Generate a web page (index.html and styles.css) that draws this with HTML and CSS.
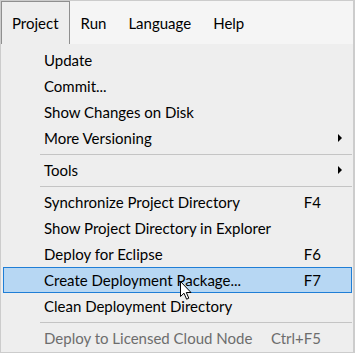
FILE: index.html
```html
<!DOCTYPE html>
<html>
<head>
<meta charset="utf-8">
<link rel="stylesheet" href="styles.css">
</head>
<body>
<div class="window">
  <div class="menubar">
    <div class="top-item active">Project</div>
    <div class="top-item">Run</div>
    <div class="top-item">Language</div>
    <div class="top-item">Help</div>
  </div>
  <div class="menu">
    <div class="item"><span class="label">Update</span><span class="key"></span><span class="sub"></span></div>
    <div class="item"><span class="label">Commit...</span><span class="key"></span><span class="sub"></span></div>
    <div class="item"><span class="label">Show Changes on Disk</span><span class="key"></span><span class="sub"></span></div>
    <div class="item"><span class="label">More Versioning</span><span class="key"></span><span class="sub"><span class="arrow"></span></span></div>
    <div class="sep"></div>
    <div class="item"><span class="label">Tools</span><span class="key"></span><span class="sub"><span class="arrow"></span></span></div>
    <div class="sep"></div>
    <div class="item"><span class="label">Synchronize Project Directory</span><span class="key">F4</span><span class="sub"></span></div>
    <div class="item"><span class="label">Show Project Directory in Explorer</span><span class="key"></span><span class="sub"></span></div>
    <div class="item"><span class="label">Deploy for Eclipse</span><span class="key">F6</span><span class="sub"></span></div>
    <div class="item selected"><span class="label">Create Deployment Package...</span><span class="key">F7</span><span class="sub"></span></div>
    <div class="item"><span class="label">Clean Deployment Directory</span><span class="key"></span><span class="sub"></span></div>
    <div class="sep"></div>
    <div class="item disabled"><span class="label">Deploy to Licensed Cloud Node</span><span class="key">Ctrl+F5</span><span class="sub"></span></div>
  </div>
  <svg class="cursor" width="13" height="19" viewBox="0 0 13 19">
    <path d="M0.5 0.5 L0.5 15.5 L4 12.2 L6.6 18.2 L8.8 17.2 L6.3 11.5 L11 11.5 Z" fill="#ffffff" stroke="#000000" stroke-width="1" stroke-linejoin="miter"/>
  </svg>
</div>
</body>
</html>
```

FILE: styles.css
```css
html, body {
  margin: 0;
  padding: 0;
  background: #eeeeee;
}

.window {
  position: relative;
  width: 355px;
  height: 353px;
  box-sizing: border-box;
  border: 1px solid #cccccc;
  border-right: 2px solid #cccccc;
  background: #eeeeee;
  font-family: Lato, "Noto Sans", sans-serif;
  font-size: 15px;
  color: #000000;
  overflow: hidden;
}

.menubar {
  display: flex;
  height: 43px;
  background: #f5f5f5;
}

.top-item {
  display: flex;
  align-items: center;
  padding: 0 10px;
  border: 1px solid transparent;
  border-bottom: none;
}

.top-item.active {
  background: #eeeeee;
  border-color: #8f8f8f;
}

.menu {
  display: flex;
  flex-direction: column;
  padding-top: 3px;
}

.item {
  display: flex;
  align-items: center;
  height: 26px;
  box-sizing: border-box;
  margin: 0 1px 0 2px;
  padding: 0 9px 0 40px;
  border: 1px solid transparent;
  white-space: nowrap;
}

.item.selected {
  background: #b7d7f3;
  border-color: #1f7ed6;
}

.item.disabled {
  color: #6d6d6d;
}

.label {
  flex: 1;
}

.key {
  text-align: right;
}

.sub {
  width: 21px;
  display: flex;
  justify-content: flex-end;
  align-items: center;
}

.arrow {
  width: 0;
  height: 0;
  border-top: 4px solid transparent;
  border-bottom: 4px solid transparent;
  border-left: 4px solid #000000;
}

.sep {
  height: 1px;
  margin: 3px 1px 2px 39px;
  background: #c4c4c4;
}

.cursor {
  position: absolute;
  left: 179px;
  top: 280px;
}
```
